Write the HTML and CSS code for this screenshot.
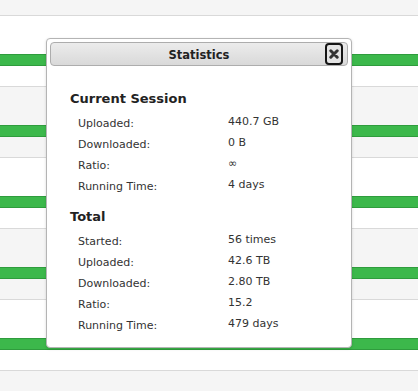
FILE: index.html
```html
<!DOCTYPE html>
<html lang="en">
<head>
  <meta charset="UTF-8">
  <title>Statistics</title>
  <link rel="stylesheet" href="styles.css">
</head>
<body>
  <div class="torrent-list">
    <div class="row top"></div>
    <div class="row"><div class="bar"></div></div>
    <div class="row alt"><div class="bar"></div></div>
    <div class="row"><div class="bar"></div></div>
    <div class="row alt"><div class="bar"></div></div>
    <div class="row"><div class="bar"></div></div>
    <div class="row alt last"></div>
  </div>

  <!-- statistics dialog -->
  <div class="dialog">
    <div class="titlebar">
      <span class="title">Statistics</span>
      <button class="close" title="Close">
        <svg width="10" height="10" viewBox="0 0 10 10">
          <path d="M1.8 1.8 L8.2 8.2 M8.2 1.8 L1.8 8.2" stroke="#333" stroke-width="3" stroke-linecap="round"/>
        </svg>
      </button>
    </div>
    <div class="content">
      <div class="section">
        <h3>Current Session</h3>
        <div class="stat"><span class="label">Uploaded:</span><span class="value">440.7 GB</span></div>
        <div class="stat"><span class="label">Downloaded:</span><span class="value">0 B</span></div>
        <div class="stat"><span class="label">Ratio:</span><span class="value">∞</span></div>
        <div class="stat"><span class="label">Running Time:</span><span class="value">4 days</span></div>
      </div>
      <div class="section">
        <h3>Total</h3>
        <div class="stat"><span class="label">Started:</span><span class="value">56 times</span></div>
        <div class="stat"><span class="label">Uploaded:</span><span class="value">42.6 TB</span></div>
        <div class="stat"><span class="label">Downloaded:</span><span class="value">2.80 TB</span></div>
        <div class="stat"><span class="label">Ratio:</span><span class="value">15.2</span></div>
        <div class="stat"><span class="label">Running Time:</span><span class="value">479 days</span></div>
      </div>
    </div>
  </div>
</body>
</html>
```

FILE: styles.css
```css
body {
  margin: 0;
  font-family: "DejaVu Sans", Verdana, sans-serif;
  background: #f5f5f5;
  overflow: hidden;
}

.torrent-list {
  width: 100%;
}

.row {
  height: 71px;
  box-sizing: border-box;
  border-top: 1px solid #d9d9d9;
  background: #fff;
  padding-top: 38px;
}

.row.alt {
  background: #f5f5f5;
}

.row.top {
  height: 15px;
  padding: 0;
  border: none;
  background: #f5f5f5;
}

.row.last {
  height: 21px;
}

.bar {
  height: 12px;
  box-sizing: border-box;
  background: #3cb84b;
  border-top: 1px solid #2f9c3d;
  border-bottom: 1px solid #2f9c3d;
}

/* dialog */
.dialog {
  position: absolute;
  left: 46px;
  top: 38px;
  width: 306px;
  height: 310px;
  box-sizing: border-box;
  background: #fff;
  border: 1px solid #b4b4b4;
  border-radius: 4px;
  padding: 3px;
  box-shadow: 0 1px 3px rgba(0,0,0,0.15);
}

.titlebar {
  position: relative;
  height: 24px;
  box-sizing: border-box;
  border: 1px solid #adadad;
  border-radius: 4px;
  background: linear-gradient(to bottom, #ececec, #d9d9d9);
  text-align: center;
  padding-top: 1px;
}

.title {
  font-size: 11.5px;
  font-weight: bold;
  line-height: 21px;
  color: #222;
}

.close {
  position: absolute;
  right: 4px;
  top: 0;
  width: 18px;
  height: 22px;
  padding: 0;
  box-sizing: border-box;
  border: 2px solid #151515;
  border-radius: 4px;
  background: #e4e4e4;
  display: flex;
  align-items: center;
  justify-content: center;
}

.content {
  padding: 25px 17px 0 20px;
}

.section + .section {
  margin-top: 14px;
}

.section h3 {
  margin: 0 0 4px;
  font-size: 13px;
  line-height: 16px;
  color: #222;
}

.stat {
  display: flex;
  height: 21px;
  line-height: 21px;
  font-size: 11px;
  color: #333;
  padding-left: 8px;
}

.stat .label {
  width: 150px;
  padding-top: 2px;
}
```
